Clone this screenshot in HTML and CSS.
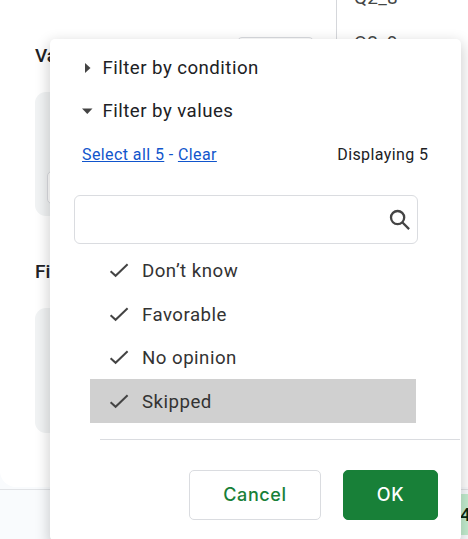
FILE: index.html
```html
<!DOCTYPE html>
<html lang="en">
<head>
<meta charset="utf-8">
<title>Pivot table filter</title>
<link rel="stylesheet" href="styles.css">
</head>
<body>
<div class="page">
  <div class="editor">
    <section class="settings">
      <div class="heading-row"><h2>Values</h2><div class="add-button"></div></div>
      <div class="card card-values"><div class="card-input"></div></div>
      <h2 class="filters-title">Filters</h2>
      <div class="card"></div>
    </section>
    <aside class="fields"><span>Q2_8</span><span>Q2_9</span></aside>
  </div>
  <footer class="sheet-bar"><div class="sum">4</div></footer>
</div>
<div class="popup">
  <div class="toggle"><svg width="16" height="16"><path d="M3 3l5.5 5-5.5 5z"/></svg><span>Filter by condition</span></div>
  <div class="toggle"><svg width="16" height="16"><path d="M0 5.5h10.5l-5.2 5.5z"/></svg><span>Filter by values</span></div>
  <div class="links"><div><a>Select all 5</a><span class="dash"> - </span><a>Clear</a></div><span class="count">Displaying 5</span></div>
  <div class="search"><svg width="22" height="22" viewBox="0 0 22 22"><circle cx="8.6" cy="8.6" r="6.6"/><path d="M13.5 13.5l6.6 6.6"/></svg></div>
  <ul class="values">
    <li><svg class="check" width="20" height="16"><path d="M1.6 8.2l5 4.6L18.6 1.3"/></svg><span>Don’t know</span></li>
    <li><svg class="check" width="20" height="16"><path d="M1.6 8.2l5 4.6L18.6 1.3"/></svg><span>Favorable</span></li>
    <li><svg class="check" width="20" height="16"><path d="M1.6 8.2l5 4.6L18.6 1.3"/></svg><span>No opinion</span></li>
    <li class="active"><svg class="check" width="20" height="16"><path d="M1.6 8.2l5 4.6L18.6 1.3"/></svg><span>Skipped</span></li>
  </ul>
  <hr>
  <div class="actions"><button class="cancel">Cancel</button><button class="ok">OK</button></div>
</div>
</body>
</html>
```
FILE: styles.css
```css
* { box-sizing: border-box; }
body {
  margin: 0;
  width: 468px;
  height: 539px;
  overflow: hidden;
  position: relative;
  font-family: Roboto, "Liberation Sans", sans-serif;
  color: #202124;
  background: #f9fbfd;
}
.page { height: 539px; }
.editor {
  display: flex;
  height: 487px;
  background: #fff;
  border-bottom-left-radius: 16px;
}
.settings { width: 336px; padding: 37px 22px 0 35px; }
.heading-row { display: flex; justify-content: space-between; height: 55px; }
h2 { margin: 0; font-size: 19px; line-height: 38px; font-weight: 500; }
.add-button {
  width: 77px;
  height: 40px;
  border: 1px solid #dadce0;
  border-radius: 5px;
}
.card { height: 125px; border-radius: 11px; background: #f1f3f4; }
.card-values { height: 124px; padding: 79px 12px 0; }
.card-input {
  height: 33px;
  background: #fff;
  border: 1px solid #dadce0;
  border-radius: 5px;
}
.filters-title { margin-top: 37px; margin-bottom: 17px; }
.fields {
  flex: 1;
  display: flex;
  flex-direction: column;
  height: 86px;
  border-left: 1px solid #d5d7db;
  padding-left: 17px;
  color: #444746;
  font-size: 19px;
  line-height: 39px;
  letter-spacing: .2px;
}
.fields span:first-child { margin-top: -22px; }
.fields span { height: 45px; }
.sheet-bar {
  display: flex;
  justify-content: flex-end;
  height: 50px;
  margin-top: 2px;
  padding-top: 4px;
  border-top: 1px solid #e1e3e6;
}
.sum {
  width: 20px;
  height: 41px;
  padding-left: 12px;
  background: #c4eed0;
  color: #072711;
  font-size: 19px;
  line-height: 41px;
  font-weight: 500;
}
.popup {
  position: absolute;
  left: 50px;
  top: 39px;
  width: 411px;
  height: 502px;
  padding-top: 7px;
  border-radius: 5px;
  background: #fff;
  box-shadow: 0 5px 14px 2px rgba(0, 0, 0, .18);
}
.toggle {
  display: flex;
  align-items: center;
  height: 43px;
  padding-left: 32px;
  font-size: 18.67px;
  letter-spacing: .46px;
}
.toggle svg { margin-right: 4.5px; fill: #444; }
.links {
  display: flex;
  justify-content: space-between;
  align-items: center;
  height: 44px;
  padding: 0 32.5px 0 32px;
  font-size: 16px;
  letter-spacing: .41px;
}
.links a {
  color: #1155cc;
  text-decoration: underline;
}
.dash { color: #1155cc; }
.search {
  display: flex;
  align-items: center;
  justify-content: flex-end;
  width: 344px;
  height: 49px;
  margin: 19px 0 0 24px;
  padding-right: 6px;
  border: 1px solid #dadce0;
  border-radius: 6px;
}
.search svg { fill: none; stroke: #444; stroke-width: 2.3; }
.values {
  list-style: none;
  margin: 4px 45px 0 40px;
  padding: 0;
  color: #333;
}
.values li {
  display: flex;
  align-items: center;
  height: 43.7px;
  padding: 2px 0 0 19px;
  font-size: 18.67px;
  letter-spacing: .48px;
}
.values .active { background: #d0d0d0; }
.check { fill: none; stroke: #444; stroke-width: 2; margin-right: 13px; }
hr {
  height: 1px;
  margin: 16px 1px 30px 50px;
  border: 0;
  background: #dadce0;
}
.actions {
  display: flex;
  justify-content: flex-end;
  gap: 22px;
  padding-right: 23px;
}
button {
  height: 50px;
  padding: 0;
  border: 1px solid #dadce0;
  border-radius: 5px;
  background: #fff;
  font: 500 18px Inter, sans-serif;
  letter-spacing: .6px;
}
.cancel { width: 132px; color: #188038; }
.ok { width: 95px; color: #fff; background: #188038; border-color: #188038; }
```
